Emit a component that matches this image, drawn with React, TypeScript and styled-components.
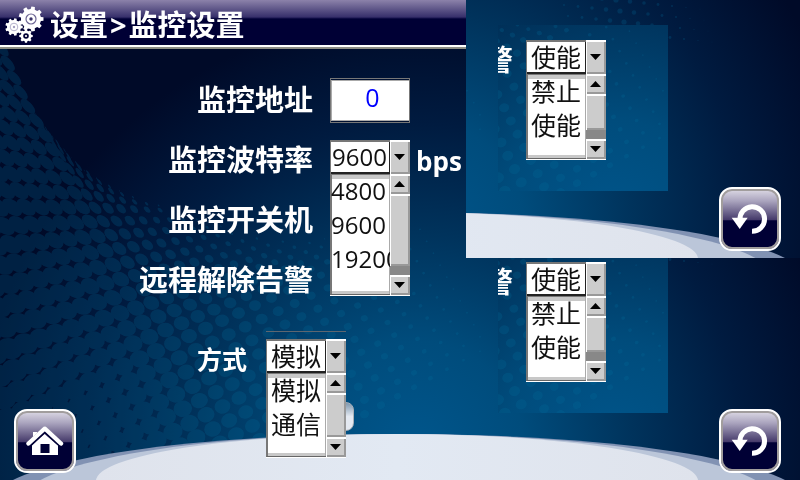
import React, { useId } from "react";
import styled, { createGlobalStyle, css } from "styled-components";

const navy = "#000035";
const face = "#cccccc";

const GlobalStyle = createGlobalStyle`
  * { box-sizing: border-box; }
  body { margin: 0; background: #00143a; }
  body, button, input, select {
    font-family: "Open Sans", "Noto Sans CJK SC", sans-serif;
  }
`;

/* ---------- background scene ---------- */

const lerp = (v: number, stops: [number, number][]) => {
  if (v <= stops[0][0]) return stops[0][1];
  for (let k = 1; k < stops.length; k++) {
    const [x0, y0] = stops[k - 1];
    const [x1, y1] = stops[k];
    if (v <= x1) return y0 + ((v - x0) / (x1 - x0)) * (y1 - y0);
  }
  return stops[stops.length - 1][1];
};

const halftone: string[] = [];
for (let i = -2; i < 34; i++) {
  const y0 = 20 + i * 14.4;
  const x0 = lerp(y0, [[0, -12], [50, 2], [100, 24], [137, 46], [207, 82], [304, 134], [480, 216]]);
  const slope = lerp(y0, [[0, 3], [50, 5], [137, 7], [304, 8.2]]);
  const decay = lerp(y0, [[50, 0.22], [137, 0.17], [207, 0.11], [290, 0.07], [350, 0.055]]);
  for (let j = -14; j < 22; j++) {
    const right = j > 0;
    const bx = lerp(y0, right
      ? [[50, 3], [137, 8], [207, 13], [290, 15], [350, 16.5]]
      : [[50, 13], [207, 14], [350, 16.5]]);
    const by = lerp(y0, right
      ? [[50, 9], [137, 7], [207, 0.5], [290, -4], [350, -7.6], [480, -9]]
      : [[50, 6], [207, 0], [290, -4], [350, -7.6], [480, -9]]);
    const ratio = right ? 0.98 - j * decay : 1 - j * 0.05;
    if (ratio < 0.08) continue;
    const cx = x0 + j * bx;
    const cy = y0 + j * by;
    if (cx < -20 || cy > 490) continue;
    const k = Math.min(ratio, 1.45) / 2;
    halftone.push(
      `matrix(${(slope * k).toFixed(2)} ${(14.4 * k).toFixed(2)} ${(bx * k).toFixed(2)} ${(by * k).toFixed(2)} ${cx.toFixed(1)} ${cy.toFixed(1)})`
    );
  }
}

const SceneSvg = styled.svg`
  position: absolute;
  inset: 0;
  width: 100%;
  height: 100%;
  z-index: -1;
`;

function Scene({ view }: { view: string }) {
  const id = useId().replace(/:/g, "");
  return (
    <SceneSvg viewBox={view} preserveAspectRatio="xMidYMax slice" aria-hidden="true">
      <defs>
        <radialGradient id={`${id}sky`} gradientUnits="userSpaceOnUse" cx="415" cy="450" r="435">
          <stop offset="0" stopColor="#00568c" />
          <stop offset="0.25" stopColor="#004c7c" />
          <stop offset="0.5" stopColor="#00335c" />
          <stop offset="0.75" stopColor="#001b40" />
          <stop offset="1" stopColor="#000a28" />
        </radialGradient>
        <linearGradient id={`${id}ground`} x1="0" x2="1" y1="0" y2="0">
          <stop offset="0" stopColor="#dfe3ec" />
          <stop offset="0.5" stopColor="#e2e9f3" />
          <stop offset="1" stopColor="#dfe3ec" />
        </linearGradient>
      </defs>
      <rect width="800" height="480" fill={`url(#${id}sky)`} />
      <g fill="#006f9c" opacity="0.24">
        {halftone.map((m, n) => <circle key={n} r="1" transform={m} />)}
        {Array.from({ length: 44 }, (_, n) => (
          <circle
            key={`f${n}`}
            cx={560 + (n % 11) * 14 + Math.floor(n / 11) * 4}
            cy={216 + Math.floor(n / 11) * 11 + (n % 11) * 1.5}
            r={Math.max(0.4, 2.6 - Math.abs((n % 11) - 4) * 0.4)}
          />
        ))}
      </g>
      <ellipse cx="399" cy="500" rx="405" ry="66" fill="#8192b3" />
      <ellipse cx="398" cy="500" rx="375" ry="66" fill="#bbc6d9" />
      <ellipse cx="397" cy="481" rx="301" ry="47" fill={`url(#${id}ground)`} />
    </SceneSvg>
  );
}

/* ---------- icons ---------- */

const gearPath = (cx: number, cy: number, r: number, teeth: number) => {
  const step = (Math.PI * 2) / teeth;
  const pts: string[] = [];
  for (let t = 0; t < teeth; t++) {
    [[-0.3, 0.8], [-0.2, 1], [0.2, 1], [0.3, 0.8]].forEach(([a, k]) => {
      const ang = (t + a) * step;
      pts.push(`${(cx + Math.cos(ang) * r * k).toFixed(2)} ${(cy + Math.sin(ang) * r * k).toFixed(2)}`);
    });
  }
  return `M${pts.join("L")}Z`;
};

function GearsIcon() {
  return (
    <svg width="40" height="38" viewBox="0 0 40 38" aria-hidden="true">
      <path d={gearPath(26, 14, 12.6, 9)} fill="#fff" />
      <circle cx="26" cy="14" r="5" fill="none" stroke="#6d6694" strokeWidth="1.2" />
      <circle cx="26" cy="14" r="1.7" fill="#3a3468" />
      <path d={gearPath(9, 22, 8.8, 9)} fill="#fff" />
      <circle cx="9" cy="22" r="3.8" fill="none" stroke="#b5b2cc" strokeWidth="1" />
      <circle cx="9" cy="22" r="1.2" fill="#a5a1c0" />
      <path d={gearPath(21, 31, 6.8, 8)} fill="#fff" />
      <circle cx="21" cy="31" r="2.8" fill={navy} />
      <circle cx="21" cy="31" r="1.1" fill="#fff" />
    </svg>
  );
}

function HomeIcon() {
  return (
    <svg width="38" height="32" viewBox="0 0 38 32" aria-hidden="true">
      <path d="M7 7h4v8H7z" fill="#fff" />
      <path d="M6 20.5 18.5 9 32 20.5V30H6z" fill="#fff" />
      <path d="M2.5 19.5 18.8 5 35 19.5" fill="none" stroke={navy} strokeWidth="5.6" />
      <path d="M2.5 18.5 18.8 3.5 35 18.5" fill="none" stroke="#fff" strokeWidth="4.4" strokeLinecap="round" strokeLinejoin="round" />
      <path d="M14.5 19h9v9h-9z" fill={navy} />
    </svg>
  );
}

function BackIcon() {
  return (
    <svg width="40" height="32" viewBox="0 0 40 32" aria-hidden="true">
      <path d="M10 17A12.3 12.3 0 1 1 22 28.3" fill="none" stroke="#fff" strokeWidth="5" />
      <path d="M1.7 14.7h16L9.7 26z" fill="#fff" />
    </svg>
  );
}

const Glyph = styled.svg`
  display: block;
`;

function Arrow({ up }: { up?: boolean }) {
  return (
    <Glyph width="12" height="6" viewBox="0 0 12 6" aria-hidden="true">
      <path d={up ? "M0 6 5.5 0 11 6z" : "M0 0h11L5.5 6z"} fill="#000" />
    </Glyph>
  );
}

/* ---------- controls ---------- */

const raised = css`
  border: 0;
  padding: 0;
  background: ${face};
  box-shadow: inset 1px 2px 0 #fff, inset -2px -2px 0 #999;
`;

const DropdownBox = styled.div`
  position: relative;
  width: 80px;
  height: 40px;
  flex: none;
`;

const DropdownHead = styled.div`
  display: flex;
  height: 34px;
`;

const ValueSelect = styled.select<{ $numeric?: boolean }>`
  appearance: none;
  width: 60px;
  height: 34px;
  padding: 0 0 0 ${(p) => (p.$numeric ? 2 : 5)}px;
  border: 0;
  border-radius: 0;
  outline: 0;
  background: #fff;
  color: #111;
  font-size: ${(p) => (p.$numeric ? 24 : 25)}px;
  line-height: 32px;
  box-shadow: inset 1px 2px 0 #777, inset -1px -2px 0 #222;
`;

const ArrowButton = styled.button<{ $tall?: boolean }>`
  ${raised}
  display: grid;
  place-items: center;
  width: 20px;
  height: ${(p) => (p.$tall ? 34 : 20)}px;
  flex: none;
`;

const Popup = styled.div<{ $height: number }>`
  position: absolute;
  top: 34px;
  left: 0;
  z-index: 2;
  display: flex;
  width: 80px;
  height: ${(p) => p.$height}px;
  border-bottom: 1px solid #fff;
`;

const OptionList = styled.ul`
  flex: 1;
  margin: 0;
  padding: 0;
  overflow: hidden;
  list-style: none;
  background: #fff;
  border-left: 1px solid #777;
  border-bottom: 1px solid #666;
  box-shadow: inset 1px 1px 0 #777, inset -1px 0 0 #aaa, inset 0 5px 0 #c8c8c8, inset 0 -3px 0 #c8c8c8;
`;

const Option = styled.li<{ $numeric?: boolean }>`
  height: 34px;
  padding-left: ${(p) => (p.$numeric ? 0 : 4)}px;
  color: #111;
  font-size: ${(p) => (p.$numeric ? 24 : 25)}px;
  line-height: 34px;
  white-space: nowrap;
`;

const ScrollBar = styled.div`
  display: flex;
  flex-direction: column;
  width: 20px;
  background: #888;
`;

const Thumb = styled.div<{ $gap: number }>`
  ${raised}
  flex: 1;
  margin-bottom: ${(p) => p.$gap}px;
`;

interface DropdownProps {
  id: string;
  value: string;
  options: string[];
  height: number;
  numeric?: boolean;
  gap?: number;
}

function Dropdown({ id, value, options, height, numeric, gap = 9 }: DropdownProps) {
  return (
    <DropdownBox>
      <DropdownHead>
        <ValueSelect id={id} defaultValue={value} $numeric={numeric}>
          {options.map((o) => <option key={o}>{o}</option>)}
        </ValueSelect>
        <ArrowButton type="button" $tall aria-label="展开"><Arrow /></ArrowButton>
      </DropdownHead>
      <Popup $height={height}>
        <OptionList role="listbox">
          {options.map((o) => (
            <Option key={o} role="option" aria-selected={o === value} $numeric={numeric}>{o}</Option>
          ))}
        </OptionList>
        <ScrollBar>
          <ArrowButton type="button" aria-label="向上"><Arrow up /></ArrowButton>
          <Thumb $gap={gap} />
          <ArrowButton type="button" aria-label="向下"><Arrow /></ArrowButton>
        </ScrollBar>
      </Popup>
    </DropdownBox>
  );
}

const NumberInput = styled.input`
  width: 80px;
  height: 45px;
  padding: 0 0 6px 5px;
  border: 1px solid #777;
  border-radius: 0;
  outline: 0;
  background: #fff;
  box-shadow: inset 0 1px 0 #001030, inset 0 -1px 0 #001030, inset 1px 2px 0 #aaa, inset 0 -2px 0 #aaa;
  color: #0000ff;
  font-size: 25px;
  text-align: center;
`;

const GlossButton = styled.button`
  display: grid;
  place-items: center;
  width: 62px;
  height: 64px;
  flex: none;
  padding: 0;
  border: 2px solid #fff;
  border-radius: 13px;
  background: linear-gradient(#dedbe6 0, #aaa4be 20%, #463b6b 51%, ${navy} 53%);
  box-shadow: inset 0 0 0 2px #a19d9d;
`;

/* ---------- page ---------- */

const Page = styled.div`
  position: relative;
  z-index: 0;
  display: grid;
  grid-template-columns: 1fr 334px;
  min-height: 100vh;
  overflow: hidden;
`;

const Main = styled.main`
  display: flex;
  flex-direction: column;
  min-width: 0;
`;

const TitleBar = styled.header`
  display: flex;
  align-items: center;
  gap: 5px;
  height: 49px;
  padding: 0 5px;
  background: linear-gradient(#8c82aa 0, #37306b 17px, #1a1650 18px, ${navy} 19px);
  border-bottom: 2px solid #8d8d85;
  box-shadow: inset 0 -2px 0 #fff;
`;

const Title = styled.h1`
  display: flex;
  align-items: center;
  gap: 2px;
  margin: 0;
  padding-top: 3px;
  color: #fff;
  font-size: 29px;
  font-weight: 700;
  line-height: 40px;
  white-space: nowrap;
`;

const Form = styled.form`
  display: grid;
  grid-template-columns: 313px auto 1fr;
  grid-auto-rows: 60px;
  align-items: center;
  padding-top: 21px;
`;

const Label = styled.label`
  color: #fff;
  font-size: 29px;
  font-weight: 700;
  line-height: 40px;
  text-align: right;
  white-space: nowrap;
`;

const Control = styled.div`
  grid-column: 2;
  padding-left: 17px;
`;

const Unit = styled.span`
  padding-top: 2px;
  padding-left: 6px;
  color: #fff;
  font-size: 26px;
  font-weight: 700;
  line-height: 40px;
`;

const MethodRow = styled.div`
  display: flex;
  align-items: flex-end;
  gap: 19px;
  margin-top: 21px;
  padding-left: 197px;
`;

const MethodLabel = styled(Label)`
  font-size: 25px;
`;

const MethodControl = styled.div`
  position: relative;
  padding-top: 7px;
  border-top: 1px solid #5d6670;
`;

const Grip = styled.span`
  position: absolute;
  top: 70px;
  right: -8px;
  width: 24px;
  height: 29px;
  border-radius: 8px;
  border: 1px solid #a9b0b8;
  background: linear-gradient(#7d97ae, #e4e9f1 50%);
`;

const Footer = styled.footer`
  display: flex;
  margin-top: auto;
  padding: 0 14px 7px;
`;

const Side = styled.aside`
  display: grid;
  grid-template-rows: 258px 1fr;
`;

const Panel = styled.section<{ $top: number }>`
  position: relative;
  z-index: 0;
  display: flex;
  justify-content: space-between;
  align-items: flex-start;
  padding: ${(p) => p.$top}px 19px 7px 32px;
  overflow: hidden;

  & > ${GlossButton} {
    align-self: flex-end;
  }
`;

const Card = styled.div<{ $clip: number }>`
  position: relative;
  z-index: 0;
  display: flex;
  gap: 13px;
  width: 170px;
  height: ${(p) => 166 - p.$clip}px;
  padding-top: ${(p) => 15 - p.$clip}px;
  overflow: hidden;
`;

const CutLabel = styled(Label)`
  display: flex;
  justify-content: flex-end;
  width: 15px;
  height: 40px;
  overflow: hidden;
`;

function AlarmPanel({ id, top, clip, scene }: { id: string; top: number; clip: number; scene?: boolean }) {
  return (
    <Panel $top={top}>
      {scene && <Scene view="466 222 334 258" />}
      <Card $clip={clip}>
        <Scene view={`302 ${247 + clip} 170 ${166 - clip}`} />
        <CutLabel htmlFor={id}>警</CutLabel>
        <Dropdown id={id} value="使能" options={["禁止", "使能"]} height={86} />
      </Card>
      <GlossButton type="button" aria-label="返回"><BackIcon /></GlossButton>
    </Panel>
  );
}

export default function App() {
  return (
    <>
      <GlobalStyle />
      <Page>
        <Scene view="0 0 800 480" />
        <Main>
          <TitleBar>
            <GearsIcon />
            <Title><span>设置</span><span>&gt;</span><span>监控设置</span></Title>
          </TitleBar>
          <Form>
            <Label htmlFor="address">监控地址</Label>
            <Control><NumberInput id="address" defaultValue="0" inputMode="numeric" /></Control>
            <span />
            <Label htmlFor="baud">监控波特率</Label>
            <Control>
              <Dropdown id="baud" value="9600" options={["4800", "9600", "19200"]} height={122} numeric />
            </Control>
            <Unit>bps</Unit>
            <Label as="span">监控开关机</Label>
            <span />
            <span />
            <Label as="span">远程解除告警</Label>
          </Form>
          <MethodRow>
            <MethodLabel htmlFor="method">方式</MethodLabel>
            <MethodControl>
              <Grip />
              <Dropdown id="method" value="模拟" options={["模拟", "通信"]} height={85} gap={0} />
            </MethodControl>
          </MethodRow>
          <Footer>
            <GlossButton type="button" aria-label="主页"><HomeIcon /></GlossButton>
          </Footer>
        </Main>
        <Side>
          <AlarmPanel id="alarm-upper" top={25} clip={0} scene />
          <AlarmPanel id="alarm-lower" top={0} clip={11} />
        </Side>
      </Page>
    </>
  );
}
